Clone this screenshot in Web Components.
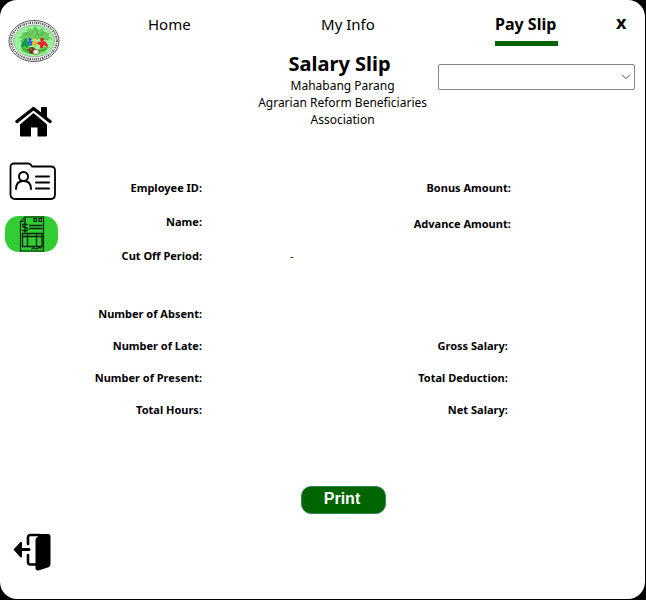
<!DOCTYPE html>
<html lang="en">
<head>
<meta charset="utf-8">
<title>Salary Slip</title>
<style>
  html, body { height: 100%; margin: 0; background: #000; }
  body { font-family: "Noto Sans", "Open Sans", sans-serif; color: #000; }
</style>
</head>
<body>
<app-window>
  <side-bar slot="side"></side-bar>
  <tab-bar slot="tabs"></tab-bar>
  <slip-heading slot="main"></slip-heading>
  <slip-details slot="main"></slip-details>
  <print-button slot="main">Print</print-button>
</app-window>

<script>
const define = (name, markup) => customElements.define(name, class extends HTMLElement {
  constructor() {
    super();
    const template = document.createElement('template');
    template.innerHTML = markup;
    this.attachShadow({ mode: 'open' }).append(template.content.cloneNode(true));
  }
});

define('app-window', `
  <style>
    :host { display: block; box-sizing: border-box; min-height: 100%; height: 100vh; padding: 0 1px 1px 0; }
    .frame { box-sizing: border-box; display: flex; min-height: 100%; background: #fff; border-radius: 17px; }
    .content { flex: 1; display: flex; flex-direction: column; padding: 12px 10px 24px 14px; min-width: 0; }
  </style>
  <div class="frame">
    <slot name="side"></slot>
    <div class="content"><slot name="tabs"></slot><slot name="main"></slot></div>
  </div>`);

define('side-bar', `
  <style>
    :host { display: flex; width: 65px; }
    nav { flex: 1; display: flex; flex-direction: column; align-items: flex-start; padding: 19px 0 28px 5px; }
    svg { display: block; }
    .logo { margin: 0 0 40px 3px; }
    button { box-sizing: border-box; display: flex; justify-content: center; align-items: center; width: 53px; height: 38px; padding: 0 0 0 2px; border: 0; background: none; border-radius: 14px; }
    .info { margin-top: 21px; }
    .pay { margin-top: 16px; height: 36px; padding: 0; background: #32cd32; }
    .exit { margin-top: auto; padding: 0; }
  </style>
  <nav aria-label="Main">
    <svg class="logo" width="52" height="44" viewBox="0 0 52 44" role="img" aria-label="Association seal">
      <ellipse cx="26" cy="22" rx="25" ry="20.5" fill="#fff" stroke="#555" stroke-width="1"/>
      <ellipse cx="26" cy="22" rx="22.8" ry="18.3" fill="none" stroke="#444" stroke-width="2" stroke-dasharray="1.1 .9 .8 1 1.5 1"/>
      <ellipse cx="26" cy="22" rx="20.5" ry="16" fill="#98f49c" stroke="#777" stroke-width=".6"/>
      <path d="M10 19l5-3-2-2 6-1 1-4 5 2 2-4 3 4 5-2 1 4 6 1-2 3 5 3-8 1-5-1-5 1-4-1-5 1z" fill="#6fcf60"/>
      <path d="M13 18l7-5 3 3 4-8 3 8 6-3 5 5M17 13l5 6M30 11l-3 8M36 15l-6 3M12 22l7-3M33 19l7 2" fill="none" stroke="#55b04c" stroke-width=".9"/>
      <path d="M13 28l8-2 4 5-4 4-7-3zM29 31l7-4 5 1-4 5-6 2z" fill="#62cf4c"/>
      <path d="M15 30l7 1M17 33l5-3M31 32l7-2" stroke="#34872a" stroke-width="1"/>
      <path d="M14 22l3-1 2 1 3 1 1 3-3 1v2h-2v-2l-3 1-1 2-1-3z" fill="#169a4b"/>
      <circle cx="18" cy="21" r="1.7" fill="#1c8c56"/>
      <circle cx="22" cy="20.5" r="1.6" fill="#244fd0"/><path d="M20 22h5l1 3-3 2-3-2z" fill="#3269df"/>
      <circle cx="27" cy="20.5" r="1.5" fill="#f1c92b"/><path d="M24 23l4-1 2 2-2 3-4-1z" fill="#e6b62e"/>
      <circle cx="34" cy="20.7" r="1.9" fill="#ec1d24"/><path d="M30 23l7-1 3 4-1 3-2-3-2 1v2h-3v-3l-3-1z" fill="#e3262b"/>
      <circle cx="24" cy="31.5" r="3.5" fill="#6b3921"/><circle cx="23" cy="30.5" r="1.3" fill="#9a6036"/>
      <ellipse cx="28" cy="33" rx="3.2" ry="2.5" fill="#fff2e5" stroke="#7a4a34" stroke-width=".8"/>
    </svg>
    <button class="home" type="button" aria-label="Home">
      <svg width="38" height="32" viewBox="0 0 38 32">
        <path d="M6 18.500L19.500 7 33 18.500V29.500q0 1-1 1h-8.500v-9h-6.500v9H7q-1 0-1-1z"/>
        <path d="M3 15.500L19.500 2.500 36 15.500" fill="none" stroke="#fff" stroke-width="6"/>
        <path d="M3 15.500L19.500 2.500 36 15.500" fill="none" stroke="#000" stroke-width="3.400" stroke-linecap="round" stroke-linejoin="round"/>
        <path d="M27 1h5q1 0 1 1v10l-6-5z"/>
      </svg>
    </button>
    <button class="info" type="button" aria-label="My Info">
      <svg width="48" height="38" viewBox="0 0 48 38" fill="none" stroke="#000" stroke-width="1.800" stroke-linecap="round" stroke-linejoin="round">
        <path d="M5 1.500h14q2 0 3 1.500l1 1.500h19q4 0 4 4V32q0 5-4 5H6q-4.500 0-4.500-5V5q0-3.500 3.500-3.500z"/>
        <circle cx="14.500" cy="14.500" r="4.500" stroke-width="2"/>
        <path d="M7 27q0-8 7.500-8t7.500 8M27 14.500h13M27 20.500h13M27 26.500h13" stroke-width="2"/>
      </svg>
    </button>
    <button class="pay" type="button" aria-label="Pay Slip" aria-current="page">
      <svg width="26" height="36" viewBox="0 0 26 36" fill="none" stroke="#06200a" stroke-width="1.200">
        <path d="M6 1h18.500v34H1.500V5.500zM6 1v4.500H1.500M15 2.500h2.500v3H15zM20 2.500h2.500v3H20z"/>
        <path d="M10 9.500h13.500M10 12.500h13.500" stroke-width="1.500"/>
        <path d="M8.500 9Q7.500 7.800 6 7.800 3.500 7.800 3.500 9.500T6 11.400 8.600 13.200 6 15Q4.300 15 3.300 13.700M6 6.300v10.200" stroke-width="1.300"/>
        <path d="M3.500 17.500h19.500v13H3.500zM3.500 20.500h19.500M8.500 17.500v13M17.500 17.500v13" stroke-width="1.300"/>
        <path d="M12.500 33.500q2-2.500 3-1.300t3 0 4 0" />
      </svg>
    </button>
    <button class="exit" type="button" aria-label="Log out">
      <svg width="38" height="38" viewBox="0 0 38 38">
        <path d="M15 11V4.500q0-2.500 2.500-2.500H26M15 22v7q0 2.500 2.500 2.500H24" fill="none" stroke="#000" stroke-width="2.600" stroke-linecap="round"/>
        <path d="M25 1h10q2.500 0 2.500 2.500V31q0 2.500-2 3.200l-9.500 3q-3.500.8-3.500-1.700V7q0-2.500 2.500-3.500z"/>
        <path d="M.5 16.500L7 9.500q2-1.500 2 .5v5h7q1.500 0 1.500 1.500T16 18H9v5q0 2.500-2 1z"/>
      </svg>
    </button>
  </nav>`);

define('nav-tab', `
  <style>
    :host { display: flex; justify-content: center; }
    button { box-sizing: border-box; font: inherit; font-size: 15px; line-height: 24px; height: 34px; padding: 0 0 5px; border: 0; border-bottom: 5px solid transparent; background: none; color: inherit; white-space: nowrap; }
    :host([active]) button { font-size: 16px; font-weight: 700; border-color: #006400; padding-right: 2px; }
  </style>
  <button type="button"><slot></slot></button>`);

define('tab-bar', `
  <style>
    :host { display: flex; margin: 0 -1px 0 1px; }
    nav { flex: 1; display: grid; grid-template-columns: repeat(3, 1fr); }
    .close { font: inherit; font-size: 18px; font-weight: 700; line-height: 20px; height: 20px; width: 20px; padding: 0; border: 0; background: none; color: inherit; text-align: left; }
  </style>
  <nav aria-label="Pages">
    <nav-tab>Home</nav-tab>
    <nav-tab>My Info</nav-tab>
    <nav-tab active>Pay Slip</nav-tab>
  </nav>
  <button class="close" type="button" aria-label="Close">x</button>`);

define('slip-heading', `
  <style>
    :host { display: flex; justify-content: flex-end; align-items: flex-start; gap: 11px; padding-top: 4px; }
    header { text-align: center; }
    h1 { margin: 0; padding-right: 6px; font-size: 20px; line-height: 27px; }
    p { margin: 0; font-size: 12px; line-height: 17px; }
    .picker { display: grid; width: 36%; max-width: 197px; margin-top: 14px; align-items: center; }
    select { grid-area: 1 / 1; box-sizing: border-box; width: 100%; height: 26px; font: inherit; font-size: 12px; appearance: none; background: #fff; border: 1px solid #858585; border-radius: 2px; }
    svg { grid-area: 1 / 1; justify-self: end; margin-right: 4px; pointer-events: none; }
  </style>
  <header>
    <h1>Salary Slip</h1>
    <p>Mahabang Parang<br>Agrarian Reform Beneficiaries<br>Association</p>
  </header>
  <div class="picker">
    <select aria-label="Cut off period"><option></option></select>
    <svg width="10" height="6" viewBox="0 0 10 6" fill="none" stroke="#555"><path d="M1 .7l4 4 4-4"/></svg>
  </div>`);

define('slip-field', `
  <style>
    :host { display: grid; grid-template-columns: var(--label, 123px) 1fr; font-size: 11px; line-height: 16px; }
    b { text-align: right; white-space: nowrap; }
    span { padding-left: 88px; }
  </style>
  <b><slot name="label"></slot></b><span><slot></slot></span>`);

define('slip-details', `
  <style>
    :host { display: flex; flex-direction: column; gap: 42px; padding-top: 52px; }
    section { display: grid; grid-template-columns: 55% 45%; }
    .col { display: flex; flex-direction: column; gap: 18px; }
    .col.right { gap: 20px; }
    .pay .col { gap: 16px; }
    .right { --label: 126px; }
    .pay .right { --label: 123px; justify-content: flex-end; }
  </style>
  <section>
    <div class="col">
      <slip-field><span slot="label">Employee ID:</span></slip-field>
      <slip-field><span slot="label">Name:</span></slip-field>
      <slip-field><span slot="label">Cut Off Period:</span>-</slip-field>
    </div>
    <div class="col right">
      <slip-field><span slot="label">Bonus Amount:</span></slip-field>
      <slip-field><span slot="label">Advance Amount:</span></slip-field>
    </div>
  </section>
  <section class="pay">
    <div class="col">
      <slip-field><span slot="label">Number of Absent:</span></slip-field>
      <slip-field><span slot="label">Number of Late:</span></slip-field>
      <slip-field><span slot="label">Number of Present:</span></slip-field>
      <slip-field><span slot="label">Total Hours:</span></slip-field>
    </div>
    <div class="col right">
      <slip-field><span slot="label">Gross Salary:</span></slip-field>
      <slip-field><span slot="label">Total Deduction:</span></slip-field>
      <slip-field><span slot="label">Net Salary:</span></slip-field>
    </div>
  </section>`);

define('print-button', `
  <style>
    :host { display: flex; justify-content: center; padding: 68px 27px 0 0; }
    button { width: 85px; height: 28px; padding: 0 3px 2px 0; border: 1px solid #2e8b57; border-radius: 10px; background: #006400; color: #fff; font: 700 16px/24px "Liberation Sans", Arial, sans-serif; }
  </style>
  <button type="button"><slot></slot></button>`);
</script>
</body>
</html>
